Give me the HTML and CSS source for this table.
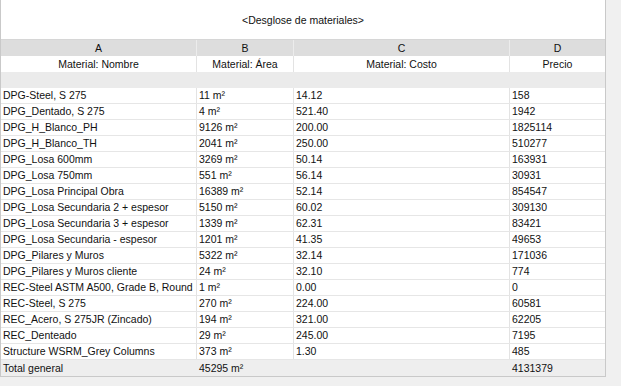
FILE: index.html
```html
<!DOCTYPE html>
<html lang="es">
<head>
<meta charset="utf-8">
<title>Desglose de materiales</title>
<link rel="stylesheet" href="styles.css">
</head>
<body>
<div class="sheet">
  <div class="title">&lt;Desglose de materiales&gt;</div>
  <div class="row letters"><div>A</div><div>B</div><div>C</div><div>D</div></div>
  <div class="row names"><div>Material: Nombre</div><div>Material: Área</div><div>Material: Costo</div><div>Precio</div></div>
  <div class="row spacer"><div></div><div></div><div></div><div></div></div>
  <div class="row data"><div>DPG-Steel, S 275</div><div>11 m²</div><div>14.12</div><div>158</div></div>
  <div class="row data"><div>DPG_Dentado, S 275</div><div>4 m²</div><div>521.40</div><div>1942</div></div>
  <div class="row data"><div>DPG_H_Blanco_PH</div><div>9126 m²</div><div>200.00</div><div>1825114</div></div>
  <div class="row data"><div>DPG_H_Blanco_TH</div><div>2041 m²</div><div>250.00</div><div>510277</div></div>
  <div class="row data"><div>DPG_Losa 600mm</div><div>3269 m²</div><div>50.14</div><div>163931</div></div>
  <div class="row data"><div>DPG_Losa 750mm</div><div>551 m²</div><div>56.14</div><div>30931</div></div>
  <div class="row data"><div>DPG_Losa Principal Obra</div><div>16389 m²</div><div>52.14</div><div>854547</div></div>
  <div class="row data"><div>DPG_Losa Secundaria 2 + espesor</div><div>5150 m²</div><div>60.02</div><div>309130</div></div>
  <div class="row data"><div>DPG_Losa Secundaria 3 + espesor</div><div>1339 m²</div><div>62.31</div><div>83421</div></div>
  <div class="row data"><div>DPG_Losa Secundaria - espesor</div><div>1201 m²</div><div>41.35</div><div>49653</div></div>
  <div class="row data"><div>DPG_Pilares y Muros</div><div>5322 m²</div><div>32.14</div><div>171036</div></div>
  <div class="row data"><div>DPG_Pilares y Muros cliente</div><div>24 m²</div><div>32.10</div><div>774</div></div>
  <div class="row data"><div>REC-Steel ASTM A500, Grade B, Round</div><div>1 m²</div><div>0.00</div><div>0</div></div>
  <div class="row data"><div>REC-Steel, S 275</div><div>270 m²</div><div>224.00</div><div>60581</div></div>
  <div class="row data"><div>REC_Acero, S 275JR (Zincado)</div><div>194 m²</div><div>321.00</div><div>62205</div></div>
  <div class="row data"><div>REC_Denteado</div><div>29 m²</div><div>245.00</div><div>7195</div></div>
  <div class="row data"><div>Structure WSRM_Grey Columns</div><div>373 m²</div><div>1.30</div><div>485</div></div>
  <div class="row total"><div>Total general</div><div>45295 m²</div><div></div><div>4131379</div></div>
</div>
</body>
</html>
```
FILE: styles.css
```css
* { box-sizing: border-box; }
html, body { margin: 0; padding: 0; }
body {
  background: #f0f0f0;
  font-family: "Liberation Sans", Arial, sans-serif;
  font-size: 10.5px;
  color: #111;
  width: 621px;
  height: 386px;
  overflow: hidden;
}
.sheet {
  width: 606px;
  background: #fff;
  border-left: 1px solid #c9c9c9;
  border-right: 1px solid #c9c9c9;
  border-bottom: 1px solid #c9c9c9;
}
.title {
  height: 40px;
  border-bottom: 1px solid #d6d6d6;
  display: flex;
  align-items: center;
  justify-content: center;
  padding-top: 1px;
}
.row {
  display: grid;
  grid-template-columns: 195px 97px 216px 96px;
  height: 16px;
  line-height: 15px;
}
.row > div {
  white-space: nowrap;
  overflow: hidden;
  padding-left: 2px;
}
.row > div + div { border-left: 1px solid #e3e3e3; }
.letters { background: #dddddd; height: 16px; line-height: 16px; }
.letters > div + div { border-left-color: #ececec; }
.letters > div, .names > div { text-align: center; padding-left: 0; }
.names { background: #fff; line-height: 16px; }
.spacer { background: #ebebeb; }
.spacer > div + div { border-left-color: #ebebeb; }
.data { border-bottom: 1px solid #e6e6e6; }
.total { background: #eeeeee; line-height: 16px; }
.total > div + div { border-left-color: #eeeeee; }
```
